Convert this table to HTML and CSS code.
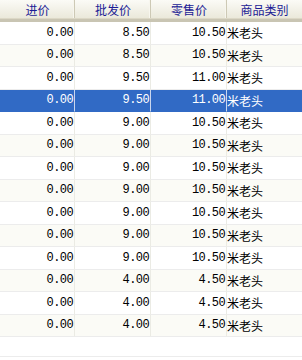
FILE: index.html
```html
<!DOCTYPE html>
<html>
<head>
<meta charset="utf-8">
<link rel="stylesheet" href="styles.css">
</head>
<body>
<div class="grid">
  <table class="tbl">
    <colgroup>
      <col class="c1"><col class="c2"><col class="c3"><col class="c4">
    </colgroup>
    <thead>
      <tr>
        <th>进价</th><th>批发价</th><th>零售价</th><th>商品类别</th>
      </tr>
    </thead>
    <tbody>
      <tr><td class="num">0.00</td><td class="num">8.50</td><td class="num">10.50</td><td class="txt">米老头</td></tr>
      <tr class="alt"><td class="num">0.00</td><td class="num">8.50</td><td class="num">10.50</td><td class="txt">米老头</td></tr>
      <tr><td class="num">0.00</td><td class="num">9.50</td><td class="num">11.00</td><td class="txt">米老头</td></tr>
      <tr class="sel"><td class="num">0.00</td><td class="num">9.50</td><td class="num">11.00</td><td class="txt">米老头</td></tr>
      <tr><td class="num">0.00</td><td class="num">9.00</td><td class="num">10.50</td><td class="txt">米老头</td></tr>
      <tr class="alt"><td class="num">0.00</td><td class="num">9.00</td><td class="num">10.50</td><td class="txt">米老头</td></tr>
      <tr><td class="num">0.00</td><td class="num">9.00</td><td class="num">10.50</td><td class="txt">米老头</td></tr>
      <tr class="alt"><td class="num">0.00</td><td class="num">9.00</td><td class="num">10.50</td><td class="txt">米老头</td></tr>
      <tr><td class="num">0.00</td><td class="num">9.00</td><td class="num">10.50</td><td class="txt">米老头</td></tr>
      <tr class="alt"><td class="num">0.00</td><td class="num">9.00</td><td class="num">10.50</td><td class="txt">米老头</td></tr>
      <tr><td class="num">0.00</td><td class="num">9.00</td><td class="num">10.50</td><td class="txt">米老头</td></tr>
      <tr class="alt"><td class="num">0.00</td><td class="num">4.00</td><td class="num">4.50</td><td class="txt">米老头</td></tr>
      <tr><td class="num">0.00</td><td class="num">4.00</td><td class="num">4.50</td><td class="txt">米老头</td></tr>
      <tr class="alt"><td class="num">0.00</td><td class="num">4.00</td><td class="num">4.50</td><td class="txt">米老头</td></tr>
    </tbody>
  </table>
  <div class="empty"></div>
</div>
</body>
</html>
```
FILE: styles.css
```css
html, body {
  margin: 0;
  padding: 0;
  background: #ffffff;
}
.grid {
  width: 302px;
  height: 360px;
  overflow: hidden;
  background: #ffffff;
}
.tbl {
  width: 302px;
  table-layout: fixed;
  border-collapse: separate;
  border-spacing: 0;
}
.c1 { width: 75px; }
.c2 { width: 76px; }
.c3 { width: 76px; }
.c4 { width: 75px; }
.tbl th {
  height: 22px;
  box-sizing: border-box;
  padding: 0;
  font-family: "Noto Sans CJK SC", sans-serif;
  font-size: 12px;
  font-weight: normal;
  color: #1b1b95;
  text-align: center;
  background: linear-gradient(#fbfbf6 0%, #f3f2e9 45%, #eae8d9 100%);
  border-bottom: 3px solid #c9c5b3;
  box-shadow: inset 0 -1px 0 #dcd8c6, inset -1px 0 0 #cdc9b5, inset -2px 0 0 #f7f6ee;
  line-height: 18px;
}
.tbl th:last-child {
  box-shadow: inset 0 -1px 0 #dcd8c6;
}
.tbl td {
  height: 22.5px;
  box-sizing: border-box;
  padding: 0 1px 0 0;
  border-right: 1px solid #ebebe4;
  border-bottom: 1px solid #ececec;
  font-size: 12px;
  color: #000000;
  white-space: nowrap;
  overflow: hidden;
}
.tbl td:last-child {
  border-right: none;
}
.num {
  text-align: right;
  font-family: "Liberation Mono", monospace;
  font-size: 11px;
  letter-spacing: -0.6px;
}
.num { font-size: 11px; }
.txt {
  text-align: left;
  font-family: "Noto Sans CJK SC", sans-serif;
  padding-left: 1px;
}
.alt td {
  background: #fbfbf6;
}
.sel td {
  background: #316ac5;
  color: #ffffff;
  border-right-color: #c9d6ee;
  border-bottom-color: #316ac5;
}
.empty {
  height: 19px;
  border-bottom: 1px solid #ececec;
}
```
